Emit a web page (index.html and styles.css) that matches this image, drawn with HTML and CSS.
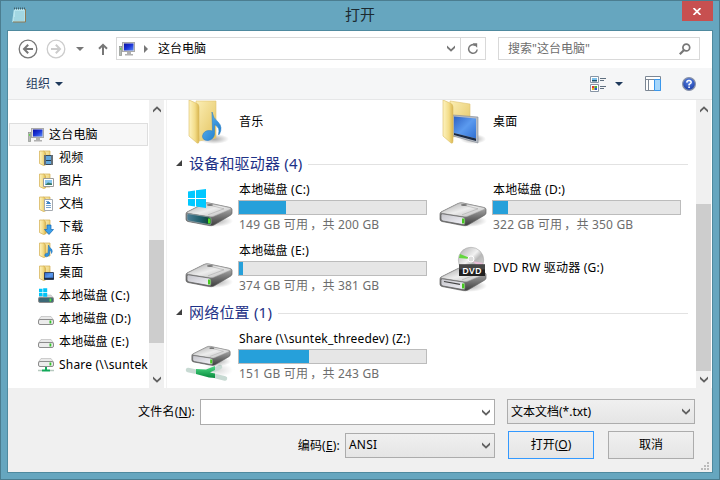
FILE: index.html
```html
<!DOCTYPE html>
<html lang="zh-CN">
<head>
    <meta charset="UTF-8">
    <meta name="viewport" content="width=device-width, initial-scale=1.0">
    <title>打开</title>

    <!-- Styles -->
    <link rel="stylesheet" href="styles.css">
</head>
<body>

    <!-- Icon Sprites -->
    <svg class="sprites" width="0" height="0">
        <defs>
            <linearGradient id="folderBack" x1="0" y1="0" x2="1" y2="1">
                <stop offset="0" stop-color="#fbeeb4"/><stop offset="1" stop-color="#e3c35f"/>
            </linearGradient>
            <linearGradient id="folderFront" x1="0" y1="0" x2="1" y2="0">
                <stop offset="0" stop-color="#fdf3c0"/><stop offset="0.6" stop-color="#f3dc88"/><stop offset="1" stop-color="#d9b650"/>
            </linearGradient>
            <linearGradient id="screen" x1="0" y1="0" x2="1" y2="1">
                <stop offset="0" stop-color="#0a10a0"/><stop offset="0.5" stop-color="#1c35d8"/><stop offset="1" stop-color="#5a8af5"/>
            </linearGradient>
            <linearGradient id="desk" x1="0" y1="0" x2="1" y2="1">
                <stop offset="0" stop-color="#2e62c4"/><stop offset="0.5" stop-color="#5b9aef"/><stop offset="1" stop-color="#2f6fd2"/>
            </linearGradient>
            <linearGradient id="note" x1="0" y1="0" x2="1" y2="1">
                <stop offset="0" stop-color="#6cc0f5"/><stop offset="1" stop-color="#1373c8"/>
            </linearGradient>
            <linearGradient id="driveTop" x1="0" y1="0" x2="1" y2="1">
                <stop offset="0" stop-color="#a8a8a8"/><stop offset="0.5" stop-color="#ededed"/><stop offset="1" stop-color="#b4b4b4"/>
            </linearGradient>
            <linearGradient id="driveSide" x1="0" y1="0" x2="0" y2="1">
                <stop offset="0" stop-color="#c8c8c8"/><stop offset="1" stop-color="#3c3c3c"/>
            </linearGradient>
            <linearGradient id="driveFace" x1="0" y1="0" x2="1" y2="1">
                <stop offset="0" stop-color="#c4c4ca"/><stop offset="1" stop-color="#f4f4fa"/>
            </linearGradient>
            <linearGradient id="driveFaceSys" x1="0" y1="0" x2="1" y2="0">
                <stop offset="0" stop-color="#4f8098"/><stop offset="0.6" stop-color="#1d5c68"/><stop offset="1" stop-color="#123f2c"/>
            </linearGradient>
            <linearGradient id="disc" x1="0" y1="0" x2="1" y2="1">
                <stop offset="0" stop-color="#a8a8a8"/><stop offset="0.45" stop-color="#f2f2f2"/><stop offset="0.6" stop-color="#b8b8b8"/><stop offset="1" stop-color="#e2e2e2"/>
            </linearGradient>
            <linearGradient id="cable" x1="0" y1="0" x2="0" y2="1">
                <stop offset="0" stop-color="#4fdc86"/><stop offset="1" stop-color="#078a3c"/>
            </linearGradient>
            <radialGradient id="help" cx="0.5" cy="0.3" r="0.8">
                <stop offset="0" stop-color="#5b86e6"/><stop offset="1" stop-color="#0d2f9c"/>
            </radialGradient>
            <radialGradient id="shade">
                <stop offset="0" stop-color="#000" stop-opacity="0.35"/><stop offset="1" stop-color="#000" stop-opacity="0"/>
            </radialGradient>
        </defs>

        <symbol id="i-computer" viewBox="0 0 16 16">
            <rect x="3.5" y="1.5" width="12" height="9" fill="#d8d8d8" stroke="#a9a9a9"/>
            <rect x="5" y="2.5" width="9.500" height="7" fill="url(#screen)"/>
            <path d="M8 11h4v2h2v1.500H6V13h2z" fill="#b0b0b0"/>
            <rect x="0.500" y="5.500" width="2.200" height="9" fill="#b5bab5" stroke="#858b85" stroke-width="0.600"/>
            <rect x="1" y="7" width="1.200" height="1.800" fill="#63d84a"/>
        </symbol>

        <symbol id="i-folder" viewBox="0 0 16 16">
            <path d="M5.500 1H12v13H5.500z" fill="url(#folderBack)" stroke="#d2ad4d" stroke-width="0.700"/>
            <path d="M1.500 1h4.500l1.500 2v12l-2 .5-4-2z" fill="url(#folderFront)" stroke="#d2ad4d" stroke-width="0.700"/>
        </symbol>

        <symbol id="i-caret" viewBox="0 0 8 4">
            <path d="M0 0h8L4 4z" fill="currentColor"/>
        </symbol>

        <symbol id="i-chevron" viewBox="0 0 8 7">
            <path d="M0 .5 4 4.200 8 .5V3L4 6.800 0 3z" fill="currentColor"/>
        </symbol>

        <symbol id="i-drive-small" viewBox="0 0 16 16">
            <path d="M3 5.500h10l2.500 3.500H.5z" fill="#e9e9e9" stroke="#bcbcbc" stroke-width="0.700"/>
            <rect x="0.500" y="8.500" width="15" height="5" rx="1.500" fill="#ececec" stroke="#8c8c8c"/>
            <rect x="11.500" y="9.500" width="1.800" height="3" fill="#35c42a"/>
        </symbol>

        <symbol id="i-drive" viewBox="0 0 48 28">
            <ellipse cx="29" cy="20" rx="19" ry="6" fill="url(#shade)"/>
            <path d="M2 11 19 2.500q2-1 4.500-.6L45 6.500q2 .5 2 2V12q0 1.300-1.500 2.200L29 24q-2 1-4.500.6L3 20.500q-2-.6-2-2.300v-5q0-1.500 1-2.200z" fill="url(#driveSide)" stroke="#666" stroke-width="0.700"/>
            <path d="M2.500 11 19 2.800q2-1 4.500-.6L45 6.700q1.500.7.300 1.700L29 15.200q-2 1-4.500.5L3.500 12.300q-2-.5-1-1.300z" fill="url(#driveTop)" stroke="#999" stroke-width="0.500"/>
            <path d="m22 3.500 17 4.300-16 6" fill="none" stroke="#aaa" stroke-width="0.600"/>
            <ellipse cx="25" cy="4" rx="3" ry="1" fill="#777"/>
            <path d="m3.500 12.800 20.500 3.200q2 .4 2 2v4q0 2-2 1.600L4 20q-2-.5-2-2v-3.700q0-1.700 1.500-1.500z" fill="url(#driveFace)" stroke="#6a6a6a" stroke-width="0.800"/>
            <path d="M23 17.500h2.500v5H23z" fill="#46c820"/>
        </symbol>
    </svg>

    <!-- Dialog Window -->
    <div class="dialog">
        <div class="title-bar">
            <svg class="title-icon" width="16" height="16" viewBox="0 0 16 16">
                <path d="M3 2h11v13H1z" fill="#a9dbe6"/>
                <path d="M14.500 2v13H2" fill="none" stroke="#8f7a55"/>
                <path d="M3 2h10.500v12H2z" fill="#b9e5ee"/>
                <path d="M4 5h9M4 7h9M4 9h9M3 11h10M3 13h10" stroke="#7dbccb" stroke-width="0.700"/>
                <path d="M3 1.500h11" stroke="#40606a" stroke-width="2" stroke-dasharray="1 1"/>
            </svg>
            <h1>打开</h1>
            <button class="close-button" aria-label="关闭">
                <svg width="8" height="7" viewBox="0 0 8 7"><path d="m.5 0 7 7m0-7-7 7" stroke="#fff" stroke-width="1.700"/></svg>
            </button>
        </div>

        <div class="dialog-body">
            <!-- Navigation -->
            <div class="nav-row">
                <svg class="nav-back" width="20" height="20" viewBox="0 0 20 20" fill="none" stroke="#777">
                    <circle cx="10" cy="10" r="8.800" stroke-width="1.300"/>
                    <path d="M15 10H6m4.200-4.200L6 10l4.200 4.200" stroke-width="2"/>
                </svg>
                <svg class="nav-forward" width="20" height="20" viewBox="0 0 20 20" fill="none" stroke="#ccc">
                    <circle cx="10" cy="10" r="8.800" stroke-width="1.300"/>
                    <path d="M5 10h9M9.800 5.800 14 10l-4.200 4.200" stroke-width="2"/>
                </svg>
                <svg class="nav-history" width="8" height="4"><use href="#i-caret"/></svg>
                <svg class="nav-up" width="10" height="12" viewBox="0 0 10 12"><path d="M5 12V2M1 5.800l4-4 4 4" fill="none" stroke="#777" stroke-width="2"/></svg>

                <div class="address">
                    <svg width="16" height="16"><use href="#i-computer"/></svg>
                    <svg class="crumb-arrow" width="4" height="8" viewBox="0 0 4 8"><path d="m0 0 4 4-4 4z" fill="#777"/></svg>
                    <span class="crumb">这台电脑</span>
                    <svg class="address-chevron" width="8" height="7"><use href="#i-chevron"/></svg>
                    <div class="refresh">
                        <svg width="12" height="12" viewBox="0 0 12 12">
                            <path d="M8.500 2.500A4.300 4.300 0 1 0 10.200 6.500" fill="none" stroke="#777" stroke-width="1.500"/>
                            <path d="M5.500.2h4.700v4.600z" fill="#777"/>
                        </svg>
                    </div>
                </div>

                <div class="search">
                    <span>搜索"这台电脑"</span>
                    <svg width="12" height="12" viewBox="0 0 12 12" fill="none" stroke="#777"><circle cx="7.300" cy="4.500" r="3.400" stroke-width="1.700"/><path d="M5 7 .8 11.200" stroke-width="2.200"/></svg>
                </div>
            </div>

            <!-- Toolbar -->
            <div class="toolbar">
                <span>组织</span>
                <svg class="organize-caret" width="8" height="4"><use href="#i-caret"/></svg>
                <svg class="view-icon" width="16" height="16" viewBox="0 0 16 16">
                    <g fill="#fff" stroke="#8795a5"><path d="M.5.5h8v6h-8zM.5 8.500h8v7h-8z"/></g>
                    <path d="M2 2h5v3H2z" fill="#7cc0ea"/><path d="M2 4h5v1.500H2z" fill="#17506b"/>
                    <path d="M2 10h2.500v2H2z" fill="#e23a2e"/><path d="M4.500 10H7v2H4.500z" fill="#40b23c"/>
                    <path d="M2 12h2.500v2H2z" fill="#e8b020"/><path d="M4.500 12H7v2H4.500z" fill="#2a55c5"/>
                    <path d="M10 2.500h6M10 4.500h4M10 10.500h6M10 12.500h4" stroke="#5f6f7f"/>
                </svg>
                <svg class="view-caret" width="8" height="4"><use href="#i-caret"/></svg>
                <svg class="pane-icon" width="16" height="15" viewBox="0 0 16 15">
                    <path d="M.5.5h15v14H.5zM.5 3.500h15M3.500 3.500v11" fill="#fff" stroke="#7c8794"/>
                    <path d="M9.500 3.500h6v11h-6z" fill="#a5d6fb" stroke="#3997ec"/>
                </svg>
                <svg class="help-icon" width="14" height="14" viewBox="0 0 14 14">
                    <circle cx="7" cy="7" r="6.400" fill="url(#help)" stroke="#8a94a8" stroke-width="1.200"/>
                    <path d="M4.800 5.600Q4.900 3.500 7 3.500t2.200 1.800Q9.200 6.500 7.100 7.400v1.200" fill="none" stroke="#fff" stroke-width="1.500"/>
                    <path d="M6.300 9.500h1.600V11H6.300z" fill="#fff"/>
                </svg>
            </div>

            <!-- File Browser -->
            <div class="browser">
                <ul class="tree">
                    <li class="tree-item selected">
                        <svg width="16" height="16"><use href="#i-computer"/></svg>这台电脑
                    </li>
                    <li class="tree-item">
                        <svg width="16" height="16" viewBox="0 0 16 16">
                            <use href="#i-folder"/>
                            <path d="M6 5h9v10H6z" fill="#3d4a55"/><path d="M8 6h5v8H8z" fill="#61a6dd"/><path d="M8 10h5v1H8z" fill="#23435d"/>
                            <path d="M7 5.500v9M14 5.500v9" stroke="#ddd" stroke-dasharray="1 1"/>
                        </svg>视频
                    </li>
                    <li class="tree-item">
                        <svg width="16" height="16" viewBox="0 0 16 16">
                            <use href="#i-folder"/>
                            <path d="M5.500 5.500h10v8h-10z" fill="#fff" stroke="#9a9a9a"/><path d="M7 7h7v5H7z" fill="#86c5ef"/><path d="m7 12 3-2.500 4 1V12z" fill="#377a68"/>
                        </svg>图片
                    </li>
                    <li class="tree-item">
                        <svg width="16" height="16" viewBox="0 0 16 16">
                            <use href="#i-folder"/>
                            <path d="M6.500 3.500h8v11h-8z" fill="#fff" stroke="#a5aab0"/><path d="M8 5.500h3M8 7.500h5M8 9.500h5M8 11.500h5" stroke="#78a5d0"/><path d="M9 6h3v2H9z" fill="#3b83c5"/>
                        </svg>文档
                    </li>
                    <li class="tree-item">
                        <svg width="16" height="16" viewBox="0 0 16 16">
                            <use href="#i-folder"/>
                            <path d="M9 6h4v4.500h2.500L11 15.500l-4.500-5H9z" fill="#3ba0ea" stroke="#1668b2" stroke-width="0.700"/>
                        </svg>下载
                    </li>
                    <li class="tree-item">
                        <svg width="16" height="16" viewBox="0 0 16 16">
                            <use href="#i-folder"/>
                            <path d="M10.500 3q.5 2.500 3 4 1.500 2 0 4.500.2-2.500-2-3.500v4q-.5 2.500-3 2.800-2.500-.5-1.500-2.500 1-1.500 3-1z" fill="#2f93e0" stroke="#1668b2" stroke-width="0.500"/>
                        </svg>音乐
                    </li>
                    <li class="tree-item">
                        <svg width="16" height="16" viewBox="0 0 16 16">
                            <use href="#i-folder"/>
                            <path d="M6.500 7.500h9v7h-9z" fill="url(#desk)" stroke="#39475e"/><path d="M6 13.500h10" stroke="#1d2d48" stroke-width="1.500"/>
                        </svg>桌面
                    </li>
                    <li class="tree-item">
                        <svg width="16" height="16" viewBox="0 0 16 16">
                            <path d="M3 7h10l2.500 3H.5z" fill="#dadada" stroke="#aaa" stroke-width="0.500"/>
                            <rect x="0.500" y="9.500" width="15" height="5" rx="1.500" fill="#3c6877" stroke="#8c8c8c"/>
                            <rect x="11.500" y="10.500" width="1.800" height="3" fill="#4fe03c"/>
                            <path d="M1 .8h3.500v3.400H1zM5.200.3h4v3.900h-4zM1 5h3.500v3.300H1zM5.200 5h4v3.800h-4z" fill="#00c3f7"/>
                        </svg>本地磁盘 (C:)
                    </li>
                    <li class="tree-item">
                        <svg width="16" height="16"><use href="#i-drive-small"/></svg>本地磁盘 (D:)
                    </li>
                    <li class="tree-item">
                        <svg width="16" height="16"><use href="#i-drive-small"/></svg>本地磁盘 (E:)
                    </li>
                    <li class="tree-item">
                        <svg width="16" height="16" viewBox="0 0 16 16">
                            <use href="#i-drive-small" y="-4" width="16" height="16"/>
                            <path d="M7 10h2v2.500h3v2H4v-2h3z" fill="#12a95a"/><path d="M0 13.500h4M12 13.500h4" stroke="#b7c9c0" stroke-width="1.500"/>
                        </svg>Share (\\suntek
                    </li>
                </ul>

                <div class="scrollbar tree-scroll">
                    <svg class="scroll-up" width="8" height="7"><use href="#i-chevron"/></svg>
                    <div class="thumb"></div>
                    <svg width="8" height="7"><use href="#i-chevron"/></svg>
                </div>

                <div class="files">
                    <div class="tiles">
                        <div class="tile">
                            <svg class="tile-icon" width="48" height="54" viewBox="0 0 48 54">
                                <ellipse cx="29" cy="44" rx="15" ry="5" fill="url(#shade)"/>
                                <path d="M11 6h20v37l-17 3z" fill="url(#folderBack)" stroke="#dfc272" stroke-width="0.600"/>
                                <path d="M4 5 11 8q3 1 3 4v34q0 3-2 2l-8-7z" fill="url(#folderFront)" stroke="#dcbd63" stroke-width="0.600"/>
                                <path d="M27 17q1 6 6 10 5 5 1.500 12-.5 1-1 .5 2-7-4-10v10q-1 5-6.500 6-5.500 0-5.500-4.500 1-5.500 7-5.500 2 0 3 .5z" fill="url(#note)" stroke="#2a7fc7" stroke-width="0.600"/>
                            </svg>
                            <div class="tile-info"><p class="tile-name folder-name">音乐</p></div>
                        </div>
                        <div class="tile">
                            <svg class="tile-icon" width="48" height="54" viewBox="0 0 48 54">
                                <ellipse cx="34" cy="44" rx="13" ry="5" fill="url(#shade)"/>
                                <path d="M11 6 31 9v30l-17 3z" fill="url(#folderBack)" stroke="#dfc272" stroke-width="0.600"/>
                                <path d="M14 20 39 22v26L14 41z" fill="#b7bcc4" stroke="#7f8790" stroke-width="0.600"/>
                                <path d="m15 21.500 22 2v20L15 38z" fill="url(#desk)"/><path d="m15 38 22 5.500v2.500l-22-6z" fill="#1a2a44"/>
                                <path d="M4 5 11 8q3 1 3 4v34q0 3-2 2l-8-7z" fill="url(#folderFront)" stroke="#dcbd63" stroke-width="0.600"/>
                            </svg>
                            <div class="tile-info"><p class="tile-name folder-name">桌面</p></div>
                        </div>
                    </div>

                    <h2 class="group devices-group"><i class="expander"></i>设备和驱动器 (4)</h2>
                    <div class="tiles">
                        <div class="tile">
                            <svg class="tile-icon" width="48" height="54" viewBox="0 0 48 54">
                                <use href="#i-drive" y="20" width="48" height="28"/>
                                <path d="m3.500 32.800 20.500 3.200q2 .4 2 2v4q0 2-2 1.600L4 40q-2-.5-2-2v-3.700q0-1.700 1.500-1.500z" fill="url(#driveFaceSys)" stroke="#8b9a9f" stroke-width="0.800"/>
                                <path d="M23 37.500h2.500v5H23z" fill="#50df20"/>
                                <path d="M3 10.500 10 9.500v7.500H3zM11 9.300 21 8v9H11zM3 18h7v7.500l-7-1zM11 18h10v9l-10-1.400z" fill="#00c8ff"/>
                            </svg>
                            <div class="tile-info">
                                <p class="tile-name">本地磁盘 (C:)</p>
                                <div class="meter"><div class="meter-fill" style="width: 25.2%"></div></div>
                                <p class="tile-space">149 GB 可用<span class="comma">，</span>共 200 GB</p>
                            </div>
                        </div>
                        <div class="tile">
                            <svg class="tile-icon" width="48" height="54" viewBox="0 0 48 54">
                                <use href="#i-drive" y="20" width="48" height="28"/>
                            </svg>
                            <div class="tile-info">
                                <p class="tile-name">本地磁盘 (D:)</p>
                                <div class="meter"><div class="meter-fill" style="width: 8%"></div></div>
                                <p class="tile-space">322 GB 可用<span class="comma">，</span>共 350 GB</p>
                            </div>
                        </div>
                        <div class="tile">
                            <svg class="tile-icon" width="48" height="54" viewBox="0 0 48 54">
                                <use href="#i-drive" y="20" width="48" height="28"/>
                            </svg>
                            <div class="tile-info">
                                <p class="tile-name">本地磁盘 (E:)</p>
                                <div class="meter"><div class="meter-fill" style="width: 1.9%"></div></div>
                                <p class="tile-space">374 GB 可用<span class="comma">，</span>共 381 GB</p>
                            </div>
                        </div>
                        <div class="tile">
                            <svg class="tile-icon" width="48" height="54" viewBox="0 0 48 54">
                                <use href="#i-drive" y="24" width="48" height="28"/>
                                <path d="m5 39.500 16 2.800" stroke="#444" stroke-width="1.200"/>
                                <circle cx="32" cy="18" r="12.700" fill="url(#disc)" stroke="#aaa" stroke-width="0.600"/>
                                <path d="m31 16-10-4-1 4 11 1z" fill="#63d63d"/><path d="m33 19 11 2-3 4z" fill="#e9bed8"/>
                                <circle cx="32" cy="17" r="3" fill="#ddd" stroke="#fff"/>
                                <path d="M20 22.500h26V34H20z" fill="#202020"/><path d="M20 22.500h26v5H20z" fill="#454545"/>
                                <text class="dvd-text" x="33" y="31.500">DVD</text>
                            </svg>
                            <div class="tile-info"><p class="tile-name">DVD RW 驱动器 (G:)</p></div>
                        </div>
                    </div>

                    <h2 class="group network-group"><i class="expander"></i>网络位置 (1)</h2>
                    <div class="tiles">
                        <div class="tile">
                            <svg class="tile-icon" width="48" height="54" viewBox="0 0 48 54">
                                <ellipse cx="33" cy="40" rx="15" ry="7" fill="url(#shade)" opacity="0.400"/>
                                <path d="m3 40 7 1.500M30 46l10 2.500M29 40l6-3" stroke="#c8dad3" stroke-width="4.500" stroke-linecap="round"/>
                                <path d="m11 39 10 .5 9-3.500v4l-5 2.500 5 1v4.500l-6-.5-13-3.500z" fill="url(#cable)"/>
                                <use href="#i-drive" x="6" y="14.500" width="40" height="24"/>
                            </svg>
                            <div class="tile-info">
                                <p class="tile-name">Share (\\suntek_threedev) (Z:)</p>
                                <div class="meter"><div class="meter-fill" style="width: 37.500%"></div></div>
                                <p class="tile-space">151 GB 可用<span class="comma">，</span>共 243 GB</p>
                            </div>
                        </div>
                    </div>
                </div>

                <div class="scrollbar files-scroll">
                    <svg class="scroll-up" width="8" height="7"><use href="#i-chevron"/></svg>
                    <div class="thumb"></div>
                    <svg width="8" height="7"><use href="#i-chevron"/></svg>
                </div>
            </div>

            <!-- File Name and Buttons -->
            <div class="footer">
                <div class="footer-row name-row">
                    <span class="label">文件名(<u>N</u>):</span>
                    <div class="combo name-combo"><svg width="8" height="7"><use href="#i-chevron"/></svg></div>
                    <div class="combo type-combo">文本文档(*.txt)<svg width="8" height="7"><use href="#i-chevron"/></svg></div>
                </div>
                <div class="footer-row encoding-row">
                    <span class="label">编码(<u>E</u>):</span>
                    <div class="combo encoding-combo">ANSI<svg width="8" height="7"><use href="#i-chevron"/></svg></div>
                    <button class="button open-button">打开(<u>O</u>)</button>
                    <button class="button">取消</button>
                </div>
                <svg class="grip" width="8" height="8" viewBox="0 0 8 8"><path d="M6 0h2v2H6zM3 3h2v2H3zM6 3h2v2H6zM0 6h2v2H0zM3 6h2v2H3zM6 6h2v2H6z" fill="#bbb"/></svg>
            </div>
        </div>
    </div>

</body>
</html>
```

FILE: styles.css
```css
/* General Styles */
* {
    margin: 0;
    padding: 0;
    box-sizing: border-box;
}

body {
    width: 720px;
    height: 480px;
    overflow: hidden;
    font-family: "Noto Sans", "Noto Sans CJK SC", sans-serif;
    font-size: 12px;
    line-height: 16px;
    color: #000;
}

svg {
    display: block;
    flex: none;
}

.sprites {
    position: absolute;
}

/* Dialog Window */
.dialog {
    height: 480px;
    display: flex;
    flex-direction: column;
    padding: 0 6px 6px;
    background: #66a6bf;
    border: 1px solid #4b7d90;
}

.title-bar {
    height: 29px;
    display: flex;
    align-items: flex-start;
    justify-content: space-between;
}

.title-icon {
    margin: 6px 11px 0 4px;
}

h1 {
    margin-top: 3px;
    font-size: 15px;
    font-weight: normal;
    line-height: 20px;
    color: #1c2a30;
}

.close-button {
    width: 31px;
    height: 20px;
    display: flex;
    align-items: center;
    justify-content: center;
    background: #c75050;
    border: none;
}

.dialog-body {
    height: 443px;
    display: flex;
    flex-direction: column;
    background: #f0f0f0;
    border: 1px solid #4f8a9f;
}

/* Navigation */
.nav-row {
    height: 37px;
    display: flex;
    align-items: center;
    padding: 0 12px 2px 10px;
    background: #fff;
    color: #777;
}

.nav-forward {
    margin-left: 8px;
}

.nav-history {
    margin-left: 10px;
}

.nav-up {
    margin: 1px 8px 0 14px;
}

.address,
.search {
    height: 23px;
    display: flex;
    align-items: center;
    border: 1px solid #d9d9d9;
}

.address {
    width: 370px;
    padding-left: 2px;
}

.crumb-arrow {
    margin: 0 10px 0 9px;
}

.crumb {
    flex: 1;
    color: #000;
}

.address-chevron {
    margin-right: 5px;
}

.refresh {
    width: 25px;
    height: 21px;
    display: flex;
    align-items: center;
    justify-content: center;
    border-left: 1px solid #d9d9d9;
}

.search {
    width: 202px;
    justify-content: space-between;
    margin-left: 12px;
    padding: 0 8px 0 9px;
    color: #6d6d6d;
}

/* Toolbar */
.toolbar {
    height: 32px;
    display: flex;
    align-items: center;
    padding: 0 16px 0 18px;
    background: #f5f6f7;
    border-bottom: 1px solid #e6e7e8;
    color: #1e395b;
}

.organize-caret {
    margin-left: 5px;
}

.view-icon {
    margin-left: auto;
}

.view-caret {
    margin: 0 22px 0 9px;
}

.help-icon {
    margin-left: 21px;
}

/* File Browser */
.browser {
    height: 288px;
    display: flex;
    background: #fff;
    letter-spacing: 0.2px;
}

.tree {
    width: 141px;
    padding: 23px 1px 0;
    list-style: none;
}

.tree-item {
    height: 23px;
    display: flex;
    align-items: center;
    gap: 5px;
    padding-left: 29px;
    white-space: nowrap;
    overflow: hidden;
}

.tree-item.selected {
    padding-left: 18px;
    background: #f7f7f7;
    border: 1px solid #dedede;
}

.scrollbar {
    width: 15px;
    display: flex;
    flex-direction: column;
    align-items: center;
    padding: 6px 0 5px;
    background: #f0f0f0;
    color: #606060;
}

.scroll-up {
    transform: scaleY(-1);
}

.thumb {
    width: 15px;
    background: #cdcdcd;
}

.tree-scroll .thumb {
    height: 103px;
    margin: 127px 0 33px;
}

.files-scroll {
    margin-right: 1px;
}

.files-scroll .thumb {
    height: 167px;
    margin: 91px 0 5px;
}

.files {
    flex: 1;
    display: flex;
    flex-direction: column;
    justify-content: flex-end;
    margin-left: 2px;
    padding: 0 8px 1px 10px;
    border-left: 1px solid #f2f2f2;
    overflow: hidden;
}

.tiles {
    flex: none;
    display: grid;
    grid-template-columns: 254px 254px;
    padding-left: 8px;
}

.tile {
    height: 61px;
    display: flex;
    align-items: center;
}

.tile-icon {
    margin-right: 5px;
}

.tile-info {
    width: 189px;
}

.tile-name {
    height: 18px;
    padding-left: 1px;
    line-height: 16px;
}

.folder-name {
    line-height: 18px;
}

.tile-space {
    padding-left: 1px;
    line-height: 19px;
    color: #6d6d6d;
}

.comma {
    margin-left: 2px;
}

.meter {
    height: 15px;
    background: #e6e6e6;
    border: 1px solid #bcbcbc;
}

.meter-fill {
    height: 100%;
    background: #26a0da;
}

.dvd-text {
    font-size: 9px;
    font-weight: 600;
    text-anchor: middle;
    fill: #fff;
}

.group {
    flex: none;
    display: flex;
    align-items: center;
    font-size: 15px;
    font-weight: normal;
    line-height: 20px;
    color: #1e3287;
}

.group::after {
    content: "";
    flex: 1;
    height: 1px;
    margin: 3px 0 0 6px;
    background: #e2e2e2;
}

.devices-group {
    height: 21px;
    margin-bottom: 4px;
}

.network-group {
    height: 25px;
    margin-bottom: 2px;
}

.expander {
    margin: 0 7px 0 -1px;
    border-left: 6px solid transparent;
    border-bottom: 6px solid #404040;
}

/* Footer */
.footer {
    flex: 1;
    padding-top: 11px;
    position: relative;
    letter-spacing: 0.2px;
}

.footer-row {
    display: flex;
}

.name-row {
    height: 32px;
}

.encoding-row {
    height: 28px;
    align-items: center;
}

.label {
    line-height: 25px;
    text-align: right;
}

.name-row .label {
    width: 187px;
}

.encoding-row .label {
    width: 332px;
}

.combo {
    height: 25px;
    display: flex;
    align-items: center;
    justify-content: space-between;
    padding: 0 4px 0 3px;
    background: linear-gradient(#f0f0f0, #e5e5e5);
    border: 1px solid #acacac;
    color: #000;
}

.combo svg {
    color: #606060;
}

.name-combo {
    width: 295px;
    height: 26px;
    justify-content: flex-end;
    margin-left: 5px;
    background: #fff;
}

.type-combo {
    width: 188px;
    margin-left: 12px;
    letter-spacing: 0;
}

.encoding-combo {
    width: 150px;
    margin-left: 5px;
}

.button {
    width: 86px;
    height: 28px;
    margin-left: 14px;
    background: linear-gradient(#f0f0f0, #e5e5e5);
    border: 1px solid #acacac;
    font: inherit;
    color: #000;
}

.open-button {
    margin-left: 13px;
    border-color: #3399ff;
}

.grip {
    position: absolute;
    right: 3px;
    bottom: 2px;
}
```
